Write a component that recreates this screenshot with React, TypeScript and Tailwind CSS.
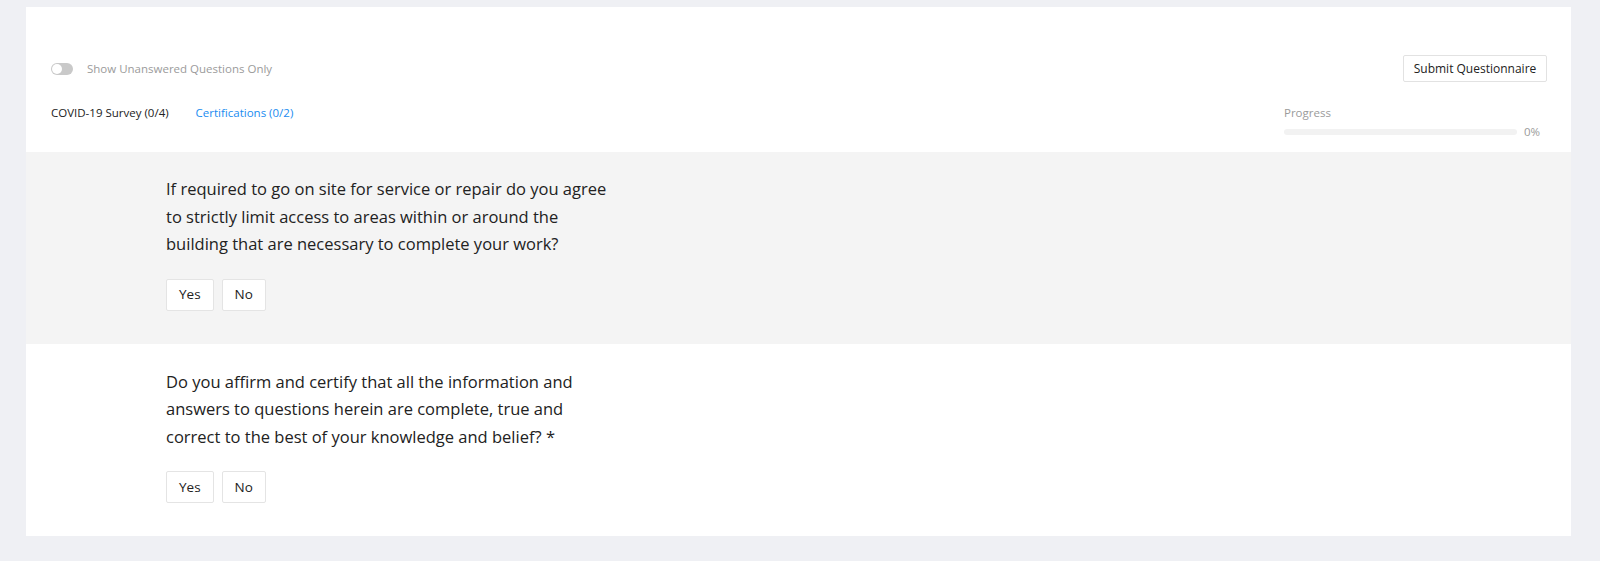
import React, { useState } from 'react';

interface Question {
  id: number;
  text: string;
  shaded: boolean;
}

const questions: Question[] = [
  {
    id: 1,
    text: 'If required to go on site for service or repair do you agree to strictly limit access to areas within or around the building that are necessary to complete your work?',
    shaded: true,
  },
  {
    id: 2,
    text: 'Do you affirm and certify that all the information and answers to questions herein are complete, true and correct to the best of your knowledge and belief? *',
    shaded: false,
  },
];

const App: React.FC = () => {
  const [answers, setAnswers] = useState<Record<number, string>>({});
  const [unansweredOnly, setUnansweredOnly] = useState(false);

  const answer = (id: number, value: string) => {
    setAnswers(prev => ({ ...prev, [id]: value }));
  };

  return (
    <div
      className="min-h-[561px] bg-[#eff0f4] pt-[7px] pl-[26px] pr-[29px] pb-[25px]"
      style={{ fontFamily: '"Open Sans", "Liberation Sans", sans-serif' }}
    >
      <div className="bg-white">
        {/* header */}
        <div className="pl-[25px] pr-[24px] pt-[48px] h-[145px]">
          <div className="flex items-center justify-between h-[27px]">
            <div className="flex items-center">
              <button
                type="button"
                onClick={() => setUnansweredOnly(!unansweredOnly)}
                className="relative w-[22px] h-[12px] rounded-full bg-[#c9c9c9]"
              >
                <span className="absolute left-[1px] top-[1px] w-[10px] h-[10px] rounded-full bg-white" />
              </button>
              <span className="ml-[14px] text-[11.5px] text-[#9b9b9b]">Show Unanswered Questions Only</span>
            </div>
            <button
              type="button"
              className="h-[27px] w-[144px] border border-[#e2e2e2] rounded-[2px] text-[12px] text-[#222]"
            >
              Submit Questionnaire
            </button>
          </div>

          <div className="flex justify-between mt-[21px]">
            <div className="flex items-center gap-[27px] text-[11.5px] h-[16px] mt-[2px]">
              <span className="text-[#222]">COVID-19 Survey (0/4)</span>
              <span className="text-[#1a8cf0]">Certifications (0/2)</span>
            </div>
            <div className="w-[256px] mr-[7px] pt-[2px]">
              <div className="text-[11.5px] leading-[16px] text-[#9b9b9b]">Progress</div>
              <div className="flex items-center mt-[2px]">
                <div className="h-[6px] w-[233px] rounded-full bg-[#f2f2f2]" />
                <span className="ml-auto text-[11.5px] text-[#9b9b9b]">0%</span>
              </div>
            </div>
          </div>
        </div>

        {/* questions */}
        {questions.map(q => (
          <div
            key={q.id}
            className={q.shaded ? 'bg-[#f4f4f4] pl-[140px] pt-[23px] pb-[33px]' : 'bg-white pl-[140px] pt-[24px] pb-[33px]'}
          >
            <p className="max-w-[446px] text-[16.5px] leading-[27.5px] text-[#222]">{q.text}</p>
            <div className="flex gap-[8px] mt-[21px]">
              {['Yes', 'No'].map(opt => (
                <button
                  key={opt}
                  type="button"
                  onClick={() => answer(q.id, opt)}
                  className={
                    'h-[32px] px-[12px] bg-white border rounded-[2px] text-[13.5px] text-[#222] ' +
                    (answers[q.id] === opt ? 'border-[#1a8cf0]' : 'border-[#e4e4e4]')
                  }
                >
                  {opt}
                </button>
              ))}
            </div>
          </div>
        ))}
      </div>
    </div>
  );
};

export default App;
